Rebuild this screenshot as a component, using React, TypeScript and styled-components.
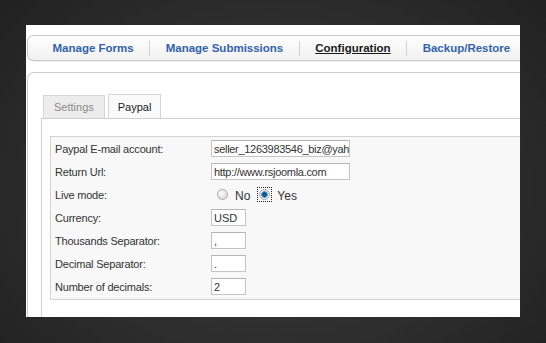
import * as React from "react";
import styled, { createGlobalStyle } from "styled-components";

const GlobalStyle = createGlobalStyle`
  html, body {
    margin: 0;
    padding: 0;
    background: #262626;
  }
  body {
    font-family: "Liberation Sans", Arial, sans-serif;
  }
`;

const Stage = styled.div`
  width: 546px;
  height: 343px;
  box-sizing: border-box;
  padding: 25px 0 0 26px;
  overflow: hidden;
  background: radial-gradient(ellipse 75% 95% at 50% 55%, #3a3a3a 0%, #2c2c2c 55%, #1d1d1d 100%);
`;

const Panel = styled.div`
  width: 494px;
  height: 292px;
  box-sizing: border-box;
  padding: 10px 0 0 1px;
  background: #fff;
  overflow: hidden;
`;

const NavBar = styled.div`
  display: flex;
  align-items: center;
  width: 540px;
  height: 26px;
  box-sizing: border-box;
  padding-left: 9px;
  border: 1px solid #cacaca;
  border-right: none;
  border-radius: 6px 0 0 6px;
  background: linear-gradient(#fefefe, #f1f1f1);
  box-shadow: 0 6px 0 -5px #f1f1f1;
`;

const NavItem = styled.a<{ $active?: boolean }>`
  padding: 0 15.5px;
  font-size: 11.5px;
  font-weight: bold;
  color: ${(p) => (p.$active ? "#1a1a1a" : "#3163ad")};
  text-decoration: ${(p) => (p.$active ? "underline" : "none")};
  white-space: nowrap;
`;

const NavSep = styled.span`
  width: 1px;
  height: 15px;
  background: #d2d2d2;
`;

const ContentBox = styled.div`
  margin-top: 11px;
  width: 540px;
  height: 280px;
  box-sizing: border-box;
  padding: 21px 0 0 13px;
  border-top: 1px solid #cdcdcd;
  border-left: 1px solid #cdcdcd;
  border-radius: 7px 0 0 0;
`;

const Tabs = styled.div`
  display: flex;
  align-items: flex-end;
  gap: 3px;
  margin-left: 2px;
`;

const Tab = styled.div<{ $active?: boolean }>`
  height: ${(p) => (p.$active ? 24 : 23)}px;
  box-sizing: border-box;
  display: flex;
  align-items: center;
  padding: 0 ${(p) => (p.$active ? 9 : 10)}px;
  border: 1px solid #d6d6d6;
  border-bottom: none;
  background: ${(p) => (p.$active ? "#fafafa" : "#ececec")};
  color: ${(p) => (p.$active ? "#1a1a1a" : "#8a8a8a")};
  font-size: 11px;
`;

const TabPane = styled.div`
  border-top: 1px solid #cfcfcf;
  border-left: 1px solid #cfcfcf;
  padding: 17px 0 0 8px;
  height: 240px;
`;

const Fieldset = styled.div`
  display: grid;
  grid-template-columns: 156px 1fr;
  grid-auto-rows: 23px;
  width: 500px;
  box-sizing: border-box;
  padding: 0 0 1px 4px;
  border: 1px solid #d3d3d3;
  background: #f8f8f8;
`;

const Label = styled.div`
  display: flex;
  align-items: center;
  font-size: 11px;
  letter-spacing: -0.2px;
  color: #333;
`;

const Field = styled.div`
  display: flex;
  align-items: center;
`;

const TextBox = styled.div<{ $wide?: boolean }>`
  width: ${(p) => (p.$wide ? 139 : 35)}px;
  height: 17px;
  box-sizing: border-box;
  padding: 0 1px 0 2px;
  display: flex;
  align-items: center;
  overflow: hidden;
  white-space: nowrap;
  border: 1px solid #c4c4c4;
  border-top-color: #b4b4b4;
  background: #fff;
  font-size: 11px;
  letter-spacing: ${(p) => (p.$wide ? -0.3 : 0)}px;
  color: #333;
`;

const RadioGroup = styled.div`
  display: flex;
  align-items: center;
  padding-left: 5px;
  font-size: 12px;
  color: #333;
`;

const RadioWrap = styled.span<{ $focused?: boolean }>`
  display: flex;
  align-items: center;
  justify-content: center;
  width: 13px;
  height: 13px;
  outline: ${(p) => (p.$focused ? "1px dotted #222" : "none")};
  outline-offset: 0;
`;

const Radio = styled.span<{ $checked?: boolean }>`
  width: 11px;
  height: 11px;
  box-sizing: border-box;
  border-radius: 50%;
  border: 1px solid #a9a9a9;
  background: ${(p) =>
    p.$checked
      ? "radial-gradient(circle, #0d5a8a 0 2px, #4a9ad0 2.6px 3px, #e8e8e8 3.6px)"
      : "radial-gradient(circle at 35% 35%, #fcfcfc, #d4d4d4)"};
`;

const RadioText = styled.span<{ $last?: boolean }>`
  margin: 2px ${(p) => (p.$last ? 0 : 8)}px 0 6px;
`;

const rows: { label: string; value?: string; wide?: boolean }[] = [
  { label: "Paypal E-mail account:", value: "seller_1263983546_biz@yah", wide: true },
  { label: "Return Url:", value: "http://www.rsjoomla.com", wide: true },
  { label: "Live mode:" },
  { label: "Currency:", value: "USD" },
  { label: "Thousands Separator:", value: "," },
  { label: "Decimal Separator:", value: "." },
  { label: "Number of decimals:", value: "2" },
];

export default function App() {
  return (
    <Stage>
      <GlobalStyle />
      <Panel>
        <NavBar>
          <NavItem>Manage Forms</NavItem>
          <NavSep />
          <NavItem>Manage Submissions</NavItem>
          <NavSep />
          <NavItem $active>Configuration</NavItem>
          <NavSep />
          <NavItem>Backup/Restore</NavItem>
        </NavBar>
        <ContentBox>
          <Tabs>
            <Tab>Settings</Tab>
            <Tab $active>Paypal</Tab>
          </Tabs>
          <TabPane>
            <Fieldset>
              {rows.map((r) => (
                <React.Fragment key={r.label}>
                  <Label>{r.label}</Label>
                  <Field>
                    {r.value !== undefined ? (
                      <TextBox $wide={r.wide}>{r.value}</TextBox>
                    ) : (
                      <RadioGroup>
                        <RadioWrap>
                          <Radio />
                        </RadioWrap>
                        <RadioText>No</RadioText>
                        <RadioWrap $focused>
                          <Radio $checked />
                        </RadioWrap>
                        <RadioText $last>Yes</RadioText>
                      </RadioGroup>
                    )}
                  </Field>
                </React.Fragment>
              ))}
            </Fieldset>
          </TabPane>
        </ContentBox>
      </Panel>
    </Stage>
  );
}
